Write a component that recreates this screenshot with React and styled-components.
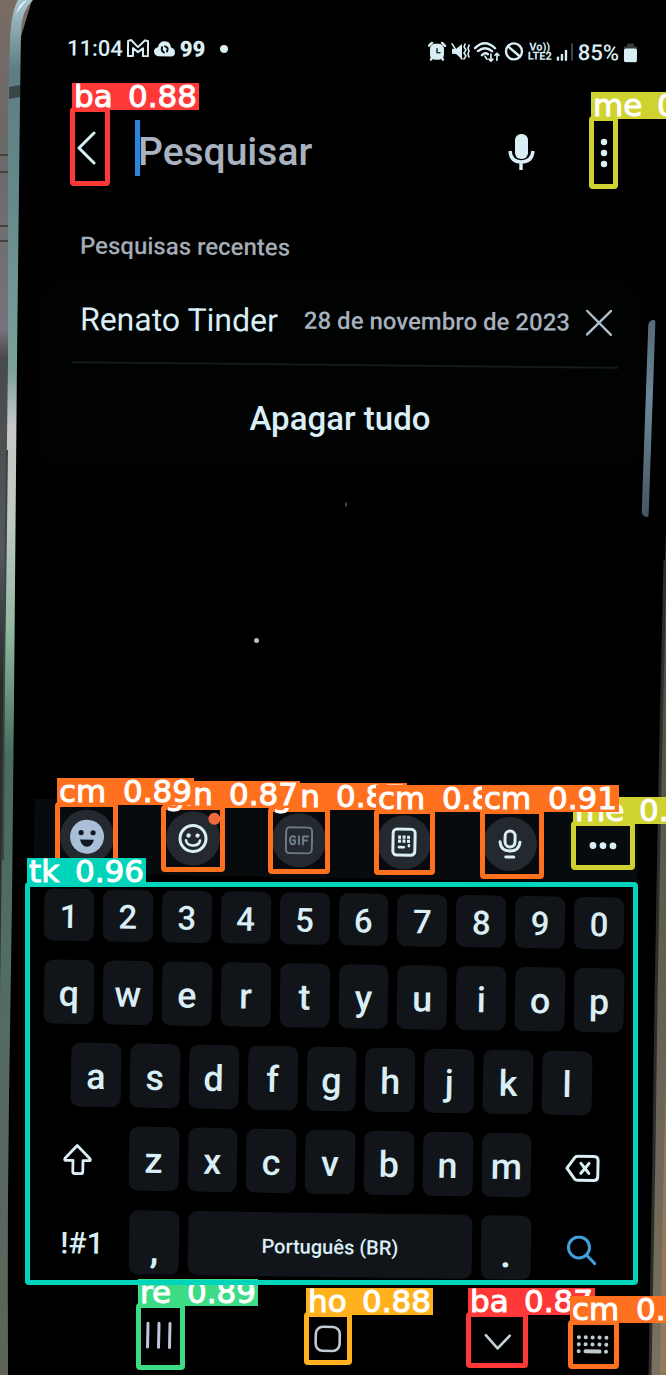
import React from "react";
import styled, { createGlobalStyle } from "styled-components";

const GlobalStyle = createGlobalStyle`
  * { box-sizing: border-box; }
  body { margin: 0; background: #000; font-family: Roboto, "Liberation Sans", sans-serif; }
  button, input { font: inherit; color: inherit; background: none; border: 0; padding: 0; margin: 0; outline: none; }
  button { cursor: pointer; }
  svg { display: block; }
`;

const ice = "#d9eef5";

const Page = styled.main`
  position: relative;
  display: flex;
  flex-direction: column;
  min-height: 100vh;
  overflow: hidden;
  background: #000;
  color: ${ice};
`;

const PhoneEdge = styled.svg`
  position: absolute;
  inset: 0;
  width: 100%;
  height: 100%;
`;

const Tilted = styled.div`
  position: relative;
  transform: rotate(${(p) => p.$deg || 0}deg);
`;

const StatusBar = styled(Tilted)`
  display: flex;
  align-items: center;
  justify-content: space-between;
  height: 32px;
  margin: 34px 28px 0 67px;
  font-size: 22px;
  font-weight: 500;
`;

const StatusGroup = styled.div`
  display: flex;
  align-items: center;
  gap: 4px;
`;

const Quotes = styled.span`
  font-weight: 900;
`;

const SearchBar = styled.form`
  position: relative;
  display: flex;
  align-items: center;
  height: 60px;
  margin: 56px 57px 0 76px;
`;

const Field = styled.label`
  display: flex;
  align-items: center;
  flex: 1;
  min-width: 0;
  margin-left: 39px;
`;

const Caret = styled.span`
  flex: none;
  width: 5px;
  height: 56px;
  margin-right: -2px;
  margin-bottom: 8px;
  background: #2b86d9;
`;

const SearchInput = styled.input`
  width: 100%;
  min-width: 0;
  height: 60px;
  font-size: 39px;
  font-weight: 500;
  &::placeholder { color: #a9b3c0; opacity: 1; }
`;

const IconButton = styled.button`
  display: flex;
  flex: none;
  align-items: center;
  justify-content: center;
`;

const SectionTitle = styled(Tilted).attrs({ as: "h2" })`
  margin: 50px 48px 16px 80px;
  font-size: 24px;
  line-height: 32px;
  font-weight: 500;
  color: #a3abb4;
`;

const Card = styled.section`
  position: relative;
  margin: 0 26px 0 40px;
  border-radius: 24px;
  background: #010303;
`;

const RecentRow = styled(Tilted)`
  display: flex;
  align-items: center;
  height: 84px;
  padding: 0 28px 2px 40px;
  white-space: nowrap;
`;

const RecentName = styled.a`
  flex: 1;
  color: ${ice};
  font-size: 32px;
  text-decoration: none;
`;

const RecentDate = styled.time`
  margin-right: 16px;
  font-size: 24px;
  font-weight: 500;
  color: #a6b1bd;
`;

const Divider = styled(Tilted)`
  height: 2px;
  margin: 0 22px 0 32px;
  background: #161a1a;
`;

const ClearAll = styled.button`
  display: block;
  width: 100%;
  height: 104px;
  padding: 0 6px;
  font-size: 33px;
  font-weight: 500;
`;

const Keyboard = styled.section`
  position: relative;
  margin-top: auto;
`;

const Toolbar = styled(Tilted)`
  display: flex;
  align-items: center;
  justify-content: space-between;
  height: 74px;
  margin: 0 28px 15px 34px;
  padding: 0 21px 0 26px;
  background: #080b0d;
`;

const Tool = styled.button`
  position: relative;
  display: flex;
  align-items: center;
  justify-content: center;
  width: ${(p) => (p.$plain ? 28 : 54)}px;
  height: 54px;
  border-radius: 50%;
  background: ${(p) => (p.$plain ? "none" : "#23292f")};
`;

const Dot = styled.span`
  position: absolute;
  top: 1px;
  right: 0;
  width: 12px;
  height: 12px;
  border-radius: 50%;
  background: #ef6a3e;
`;

const Keys = styled.div`
  display: grid;
  gap: 19px;
  padding: 0 42px 0 44px;
`;

const KeyRow = styled(Tilted)`
  display: grid;
  grid-template-columns: ${(p) => p.$cols};
  gap: 9px;
  height: ${(p) => (p.$short ? 52 : 64)}px;
  padding: 0 ${(p) => (p.$inset ? 32 : 0)}px 0 ${(p) => (p.$inset ? 27 : 0)}px;
`;

const sizes = { letter: 36, digit: 33, symbol: 30, space: 20 };

const Key = styled.button`
  display: flex;
  min-width: 0;
  align-items: ${(p) => (p.$low ? "flex-end" : "center")};
  justify-content: center;
  padding: 3px 0 ${(p) => (p.$low ? 4 : 0)}px;
  border-radius: 9px;
  background: ${(p) => (p.$bare ? "none" : "#11151a")};
  font-size: ${(p) => sizes[p.$size || "letter"]}px;
  line-height: 40px;
  font-weight: ${(p) => (p.$low ? 700 : 500)};
  white-space: nowrap;
`;

const NavBar = styled(Tilted).attrs({ as: "nav" })`
  display: grid;
  grid-template-columns: 168fr 170fr 93fr auto;
  align-items: center;
  justify-items: start;
  height: 98px;
  padding: 26px 57px 0 146px;
`;

const ScrollThumb = styled.div`
  position: absolute;
  top: 320px;
  right: 14px;
  width: 7px;
  height: 197px;
  border-radius: 6px 2px 2px 6px;
  background: linear-gradient(#54697a, #6d8798 40%, #435663);
  transform: rotate(2deg);
`;

const Speck = styled.span`
  position: absolute;
  top: ${(p) => p.$y}px;
  left: ${(p) => (p.$x / 666) * 100}%;
  width: ${(p) => p.$w}px;
  height: 5px;
  border-radius: 50%;
  background: ${(p) => p.$tone};
`;

const Overlay = styled.div`
  position: absolute;
  inset: 0;
  pointer-events: none;
`;

const Box = styled.div`
  position: absolute;
  top: ${(p) => p.$y}px;
  left: ${(p) => (p.$x / 666) * 100}%;
  width: ${(p) => (p.$w / 666) * 100}%;
  height: ${(p) => p.$h}px;
  border: 5px solid ${(p) => p.$color};
  border-radius: 4px;
`;

const Tag = styled.div`
  position: absolute;
  bottom: calc(100% + 2px);
  left: -3px;
  display: flex;
  justify-content: space-between;
  width: ${(p) => p.$w}px;
  height: 27px;
  padding: 0 2px;
  background: ${(p) => p.$color};
  color: #fff;
  font-family: "DejaVu Sans", sans-serif;
  font-size: 31px;
  line-height: 27px;
  white-space: nowrap;
  -webkit-text-stroke: 1px #fff;
`;

const red = "#ff3838";
const lime = "#cfd231";
const orange = "#ff701f";
const teal = "#00d4bb";
const green = "#3ddb86";
const amber = "#ffb21d";

const detections = [
  { name: "ba", score: "0.88", x: 70, y: 107, w: 40, h: 79, tag: 127, color: red },
  { name: "me", score: "0.88", x: 589, y: 116, w: 29, h: 73, tag: 137, color: lime },
  { name: "me", score: "0.87", x: 571, y: 821, w: 64, h: 49, tag: 137, color: lime },
  { name: "gin", score: "0.87", x: 268, y: 807, w: 62, h: 67, tag: 137, color: orange },
  { name: "cm", score: "0.87", x: 374, y: 809, w: 61, h: 66, tag: 137, color: orange },
  { name: "gin", score: "0.87", x: 161, y: 805, w: 64, h: 67, tag: 137, color: orange },
  { name: "cm", score: "0.89", x: 55, y: 802, w: 63, h: 66, tag: 137, color: orange },
  { name: "cm", score: "0.91", x: 480, y: 809, w: 64, h: 70, tag: 137, color: orange },
  { name: "re", score: "0.89", x: 136, y: 1303, w: 49, h: 67, tag: 120, color: green },
  { name: "ho", score: "0.88", x: 304, y: 1312, w: 48, h: 53, tag: 127, color: amber },
  { name: "ba", score: "0.87", x: 466, y: 1312, w: 62, h: 56, tag: 127, color: red },
  { name: "cm", score: "0.87", x: 568, y: 1320, w: 51, h: 49, tag: 137, color: orange },
  { name: "tk", score: "0.96", x: 25, y: 882, w: 613, h: 403, tag: 119, color: teal },
];

function Detection({ name, score, x, y, w, h, tag, color }) {
  return (
    <Box $x={x} $y={y} $w={w} $h={h} $color={color}>
      <Tag $w={tag} $color={color}>
        <span>{name}</span>
        <span>{score}</span>
      </Tag>
    </Box>
  );
}

function Backdrop() {
  return (
    <PhoneEdge viewBox="0 0 666 1375" preserveAspectRatio="none" aria-hidden="true">
      <defs>
        <linearGradient id="wall" x1="0" y1="0" x2="0" y2="1">
          <stop offset="0" stopColor="#796c63" />
          <stop offset="0.1" stopColor="#6a6867" />
          <stop offset="0.24" stopColor="#74747a" />
          <stop offset="0.26" stopColor="#48494d" />
          <stop offset="0.4" stopColor="#54575b" />
          <stop offset="0.5" stopColor="#272a2b" />
          <stop offset="0.7" stopColor="#30312f" />
          <stop offset="1" stopColor="#5b584e" />
        </linearGradient>
        <linearGradient id="rim" x1="0" y1="0" x2="0" y2="1">
          <stop offset="0" stopColor="#a9c6d0" />
          <stop offset="0.05" stopColor="#5d7d83" />
          <stop offset="0.15" stopColor="#668a8b" />
          <stop offset="0.27" stopColor="#7ba39c" />
          <stop offset="0.31" stopColor="#c7c9c8" />
          <stop offset="0.38" stopColor="#bdc8c1" />
          <stop offset="0.46" stopColor="#91b7a2" />
          <stop offset="0.55" stopColor="#486c5d" />
          <stop offset="0.7" stopColor="#536c66" />
          <stop offset="1" stopColor="#5d6359" />
        </linearGradient>
        <linearGradient id="side" x1="0" y1="0" x2="0" y2="1">
          <stop offset="0" stopColor="#454943" />
          <stop offset="0.5" stopColor="#615e50" />
          <stop offset="1" stopColor="#7b7160" />
        </linearGradient>
      </defs>
      <path d="M0 0H32L20 40L8 1000V1375H0Z" fill="url(#wall)" />
      <path d="M0 155H9M0 172H9M0 226H9M0 241H9" stroke="#46413d" strokeWidth="2" />
      <path d="M18 0Q11 12 10 40L8 100V360L4 680L0 1000V1375H8L7 1290L9 1100L12 900L14 700L17 360L20 100L21 30Q22 10 33 0Z" fill="url(#rim)" />
      <path d="M16 14Q20 2 27 0Q20 8 16 14Z" fill="#eef8ff" />
      <path d="M9 87L20 85V97L9 99Z" fill="#3c4648" />
      <path d="M7 450L4 680L3 860" stroke="#3c4540" strokeWidth="2" fill="none" />
      <path d="M666 530L660 780L656 1000L655 1120L650 1375H666Z" fill="url(#side)" />
      <path d="M665 560L660 780L656 1000L654 1150L650 1375" stroke="#2d2e2a" strokeWidth="3" fill="none" />
      <path d="M666 1080L663 1200L660 1375H666Z" fill="#96785b" />
    </PhoneEdge>
  );
}

const Svg = ({ w, h, box, children }) => (
  <svg width={w} height={h} viewBox={box || `0 0 ${w} ${h}`} fill="none" stroke="currentColor" strokeLinecap="round" strokeLinejoin="round" aria-hidden="true">
    {children}
  </svg>
);

const MailIcon = () => (
  <Svg w={22} h={18}>
    <path d="M1 17V2L4 1L11 8L18 1L21 2V17H16V9L11 13L6 9V17Z" strokeWidth="2" />
  </Svg>
);

const CloudIcon = () => (
  <Svg w={23} h={17}>
    <path d="M5 16Q1 15 1 11Q1 8 5 7Q6 1 12 1Q17 1 18 7Q22 8 22 12Q22 16 18 16Z" fill="currentColor" stroke="none" />
    <path d="M9 7Q8 11 11 12M14 11Q16 7 12 6" stroke="#0b1215" strokeWidth="2" />
  </Svg>
);

const AlarmIcon = () => (
  <Svg w={19} h={19}>
    <path d="M1 4L4 1M17 4L14 1M3 18L4 16M15 18L14 16" strokeWidth="2.4" />
    <rect x="2" y="2" width="14" height="16" rx="5" fill="currentColor" stroke="none" />
    <path d="M9 7V11H12" stroke="#2b3a40" strokeWidth="1.6" />
  </Svg>
);

const MuteIcon = () => (
  <Svg w={19} h={19}>
    <path d="M1 7H5L11 2V17L5 12H1Z" fill="currentColor" stroke="none" />
    <path d="M1 2L11 17M14 2L13 5L15 8L13 11L15 14L13 17M18 3L17 6L18 9L17 12L18 15" strokeWidth="1.6" />
  </Svg>
);

const WifiIcon = () => (
  <Svg w={26} h={21}>
    <path d="M1 7Q11 -3 21 7M4 10Q11 4 18 10M8 14Q11 11 14 13" strokeWidth="2.4" />
    <path d="M11 15L13 18M17 20V13M15 18L17 20L19 18M23 19V12M21 14L23 12L25 14" strokeWidth="1.7" />
  </Svg>
);

const BlockIcon = () => (
  <Svg w={20} h={20}>
    <circle cx="10" cy="10" r="8" strokeWidth="2.4" />
    <path d="M4 5L16 15" strokeWidth="2.4" />
  </Svg>
);

const LteText = styled.span`
  font-size: 11px;
  line-height: 9px;
  font-weight: 700;
  text-align: center;
`;

const SignalIcon = () => (
  <Svg w={18} h={18}>
    <path d="M2 15V17M6 12V17M10 8V17" strokeWidth="2.4" />
    <path d="M16 1V17" stroke="#3c4548" strokeWidth="2" />
  </Svg>
);

const BatteryIcon = () => (
  <Svg w={15} h={20}>
    <path d="M4 1H11V4H14V8H1V4H4Z" fill="#343b3d" stroke="none" />
    <rect x="1" y="6" width="13" height="14" rx="2" fill="currentColor" stroke="none" />
  </Svg>
);

const letters = (chars, size) => [...chars].map((c) => <Key type="button" key={c} $size={size}>{c}</Key>);

export default function App() {
  return (
    <Page>
      <GlobalStyle />
      <Backdrop />

      <StatusBar $deg={0.5}>
        <StatusGroup>
          <span>11:04</span>
          <MailIcon />
          <CloudIcon />
          <Quotes>99</Quotes>
          <Svg w={24} h={10}>
            <circle cx="15" cy="5" r="4" fill="currentColor" stroke="none" />
          </Svg>
        </StatusGroup>
        <StatusGroup>
          <AlarmIcon />
          <MuteIcon />
          <WifiIcon />
          <BlockIcon />
          <LteText>Vo))<br />LTE2</LteText>
          <SignalIcon />
          <span>85%</span>
          <BatteryIcon />
        </StatusGroup>
      </StatusBar>

      <SearchBar role="search">
        <IconButton type="button" aria-label="Voltar">
          <Svg w={20} h={44}>
            <path d="M18 3L3 18L18 33" strokeWidth="3" />
          </Svg>
        </IconButton>
        <Field>
          <Caret />
          <SearchInput type="text" placeholder="Pesquisar" aria-label="Pesquisar" />
        </Field>
        <IconButton type="button" aria-label="Pesquisa por voz">
          <Svg w={94} h={40}>
            <rect x="10" y="2" width="13" height="25" rx="6" fill="currentColor" stroke="none" />
            <path d="M5 19Q6 30 16 30Q27 30 28 19M16 30V38" strokeWidth="3.4" strokeLinecap="butt" />
          </Svg>
        </IconButton>
        <IconButton type="button" aria-label="Mais opções">
          <Svg w={10} h={32}>
            <g fill="currentColor" stroke="none">
              <circle cx="5" cy="6" r="3.2" />
              <circle cx="5" cy="17" r="3.2" />
              <circle cx="5" cy="28" r="3.2" />
            </g>
          </Svg>
        </IconButton>
      </SearchBar>

      <SectionTitle $deg={0.5}>Pesquisas recentes</SectionTitle>
      <Card>
        <RecentRow $deg={0.4}>
          <RecentName href="#renato">Renato Tinder</RecentName>
          <RecentDate dateTime="2023-11-28">28 de novembro de 2023</RecentDate>
          <IconButton type="button" aria-label="Remover">
            <Svg w={26} h={26}>
              <path d="M1 1L25 25M25 1L1 25" strokeWidth="2.4" stroke="#aebfcb" />
            </Svg>
          </IconButton>
        </RecentRow>
        <Divider $deg={0.6} />
        <ClearAll type="button">Apagar tudo</ClearAll>
      </Card>
      <ScrollThumb />
      <Speck $x={345} $y={502} $w={2} $tone="#4b4a48" />
      <Speck $x={254} $y={638} $w={5} $tone="#b9bdc0" />

      <Keyboard>
        <Toolbar $deg={1}>
          <Tool type="button" aria-label="Emojis">
            <Svg w={36} h={36}>
              <circle cx="18" cy="18" r="17" fill="#a9bfd8" stroke="none" />
              <circle cx="12" cy="14" r="2.6" fill="#111920" stroke="none" />
              <circle cx="24" cy="14" r="2.6" fill="#111920" stroke="none" />
              <path d="M11 21H25Q23 28 18 28Q13 28 11 21Z" fill="#111920" stroke="none" />
            </Svg>
          </Tool>
          <Tool type="button" aria-label="Figurinhas">
            <Svg w={30} h={30}>
              <circle cx="15" cy="15" r="13" strokeWidth="3" />
              <circle cx="10.5" cy="12" r="2.2" fill="currentColor" stroke="none" />
              <circle cx="19.5" cy="12" r="2.2" fill="currentColor" stroke="none" />
              <path d="M8 17Q9 22 15 22Q21 22 22 17" strokeWidth="2.6" />
            </Svg>
            <Dot />
          </Tool>
          <Tool type="button" aria-label="GIF">
            <Svg w={28} h={28}>
              <rect x="1" y="1" width="26" height="26" rx="4" stroke="#6d7a88" strokeWidth="2" />
              <path d="M10 11Q9 10 8 10Q5 10 5 14Q5 18 8 18Q10 18 10 16V14H8M14 10V18M18 18V10H23M18 14H22" stroke="#6d7a88" strokeWidth="2" />
            </Svg>
          </Tool>
          <Tool type="button" aria-label="Modos de teclado">
            <Svg w={26} h={30}>
              <rect x="2" y="2" width="22" height="26" rx="4" strokeWidth="3" />
              <path d="M7 10H19M7 14H19" strokeWidth="3.2" strokeDasharray="3 1.5" strokeLinecap="butt" />
              <path d="M8 20H13M18 18V19" strokeWidth="2.6" />
            </Svg>
          </Tool>
          <Tool type="button" aria-label="Ditado">
            <Svg w={24} h={30}>
              <rect x="7" y="2" width="10" height="16" rx="5" strokeWidth="3" />
              <path d="M2 13Q3 22 12 22Q21 22 22 13M8 28H16" strokeWidth="3" />
            </Svg>
          </Tool>
          <Tool type="button" $plain aria-label="Mais">
            <Svg w={28} h={8}>
              <g fill="currentColor" stroke="none">
                <circle cx="4" cy="4" r="3.4" />
                <circle cx="14" cy="4" r="3.4" />
                <circle cx="24" cy="4" r="3.4" />
              </g>
            </Svg>
          </Tool>
        </Toolbar>

        <Keys>
          <KeyRow $deg={0.9} $short $cols="repeat(10, 1fr)">{letters("1234567890", "digit")}</KeyRow>
          <KeyRow $deg={0.9} $cols="repeat(10, 1fr)">{letters("qwertyuiop")}</KeyRow>
          <KeyRow $deg={1} $inset $cols="repeat(9, 1fr)">{letters("asdfghjkl")}</KeyRow>
          <KeyRow $deg={1} $cols="76fr repeat(7, 50fr) 84fr">
            <Key type="button" $bare aria-label="Maiúsculas">
              <Svg w={38} h={32}>
                <path d="M14 2L27 15Q28 17 26 17H20V28Q20 30 18 30H12Q10 30 10 28V17H3Q1 17 2 15Z" strokeWidth="2.8" />
              </Svg>
            </Key>
            {letters("zxcvbnm")}
            <Key type="button" $bare aria-label="Apagar">
              <Svg w={36} h={28}>
                <path d="M3 14L11 3Q12 2 14 2H30Q34 2 34 6V22Q34 26 30 26H14Q12 26 11 25Z" strokeWidth="3" />
                <path d="M17 9L25 19M25 9L17 19" strokeWidth="3" />
              </Svg>
            </Key>
          </KeyRow>
          <KeyRow $deg={0.8} $cols="76fr 50fr 283fr 50fr 84fr">
            <Key type="button" $bare $size="symbol">!#1</Key>
            <Key type="button" $low>,</Key>
            <Key type="button" $size="space">Português (BR)</Key>
            <Key type="button" $low>.</Key>
            <Key type="button" $bare aria-label="Pesquisar">
              <Svg w={30} h={30}>
                <g stroke="#41a0dc" strokeWidth="3">
                  <circle cx="12" cy="12" r="10.5" />
                  <path d="M20 20L28 28" />
                </g>
              </Svg>
            </Key>
          </KeyRow>
        </Keys>

        <NavBar $deg={1.2}>
          <IconButton type="button" aria-label="Recentes">
            <Svg w={26} h={28}>
              <path d="M2 2V26M13 2V26M24 2V26" strokeWidth="3" stroke="#bcc6dc" />
            </Svg>
          </IconButton>
          <IconButton type="button" aria-label="Início">
            <Svg w={28} h={28}>
              <rect x="2" y="2" width="24" height="24" rx="7" strokeWidth="2.6" stroke="#bfcbd4" />
            </Svg>
          </IconButton>
          <IconButton type="button" aria-label="Ocultar teclado">
            <Svg w={28} h={18}>
              <path d="M2 2L14 15L26 2" strokeWidth="2.6" stroke="#c3d0d6" />
            </Svg>
          </IconButton>
          <IconButton type="button" aria-label="Trocar teclado">
            <Svg w={32} h={20}>
              <g strokeWidth="4" stroke="#bdcad0">
                <path d="M2 3H31M2 10H31" strokeDasharray="0.1 6.8" />
                <path d="M2 17H2.1M9 17H23M29.4 17H29.5" />
              </g>
            </Svg>
          </IconButton>
        </NavBar>
      </Keyboard>

      <Overlay aria-hidden="true">
        {detections.map((d) => (
          <Detection key={`${d.x}-${d.y}`} {...d} />
        ))}
      </Overlay>
    </Page>
  );
}
